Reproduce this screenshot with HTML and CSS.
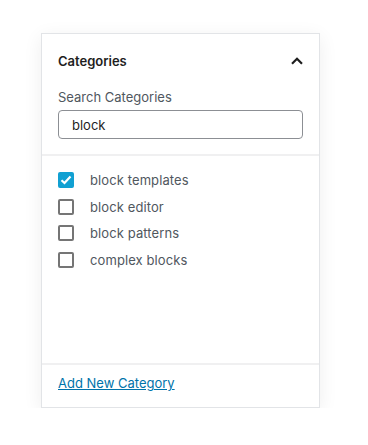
FILE: index.html
```html
<!DOCTYPE html>
<html lang="en">

<head>
    <meta charset="UTF-8">
    <meta name="viewport" content="width=device-width, initial-scale=1.0">
    <title>Categories</title>
    <link rel="stylesheet" href="styles.css">
</head>

<body>

    <div class="panel">
        <div class="panel-top">
            <div class="panel-header">
                <span class="panel-title">Categories</span>
                <svg class="chevron" width="12" height="8" viewBox="0 0 12 8">
                    <path d="M1 6.8 L6 1.8 L11 6.8" fill="none" stroke="#1e1e1e" stroke-width="2.2" />
                </svg>
            </div>
            <label class="search-label" for="search">Search Categories</label>
            <input class="search" type="text" id="search" value="block">
        </div>

        <div class="list">
            <label class="item">
                <span class="box checked">
                    <svg width="12" height="10" viewBox="0 0 12 10">
                        <path d="M1.5 5.2 L4.5 8 L10.5 1.5" fill="none" stroke="#fff" stroke-width="2.2" />
                    </svg>
                </span>
                block templates
            </label>
            <label class="item"><span class="box"></span>block editor</label>
            <label class="item"><span class="box"></span>block patterns</label>
            <label class="item"><span class="box"></span>complex blocks</label>
        </div>

        <div class="panel-footer">
            <a href="#" class="add-link">Add New Category</a>
        </div>
    </div>

</body>

</html>
```

FILE: styles.css
```css
* {
    margin: 0;
    padding: 0;
    box-sizing: border-box;
}

body {
    font-family: Inter, "Noto Sans", sans-serif;
    font-size: 13px;
    background: #fff;
    padding: 33px 0 0 41px;
}

.panel {
    width: 279px;
    height: 375px;
    border: 1px solid #e2e4e7;
    background: #fff;
    box-shadow: 0 4px 18px rgba(0, 0, 0, 0.07);
    display: flex;
    flex-direction: column;
}

.panel-top {
    padding: 19px 16px 15px 16px;
    border-bottom: 2px solid #f0f0f1;
}

.panel-header {
    display: flex;
    justify-content: space-between;
    align-items: center;
    height: 16px;
    margin-bottom: 20px;
}

.panel-title {
    font-weight: 600;
    color: #1e1e1e;
    line-height: 16px;
}

.chevron {
    margin-right: 0;
}

.search-label {
    display: block;
    color: #50575e;
    line-height: 16px;
    margin-bottom: 5px;
}

.search {
    width: 245px;
    height: 29px;
    border: 1px solid #8c8f94;
    border-radius: 4px;
    padding: 0 13px;
    font-family: inherit;
    font-size: 13px;
    color: #1e1e1e;
    outline: none;
}

.list {
    height: 207px;
    padding: 16px 0 0 16px;
    display: flex;
    flex-direction: column;
    gap: 10.7px;
}

.item {
    display: flex;
    align-items: center;
    height: 16px;
    color: #50575e;
    line-height: 16px;
    letter-spacing: 0.1px;
}

.box {
    width: 16px;
    height: 16px;
    border: 2px solid #757575;
    border-radius: 2px;
    margin-right: 16px;
    display: flex;
    justify-content: center;
    align-items: center;
}

.box.checked {
    background: #11a0d2;
    border-color: #11a0d2;
}

.panel-footer {
    flex: 1;
    border-top: 2px solid #f0f0f1;
    padding: 10px 16px 0 16px;
}

.add-link {
    color: #0073aa;
    line-height: 16px;
    text-decoration: underline;
}
```
